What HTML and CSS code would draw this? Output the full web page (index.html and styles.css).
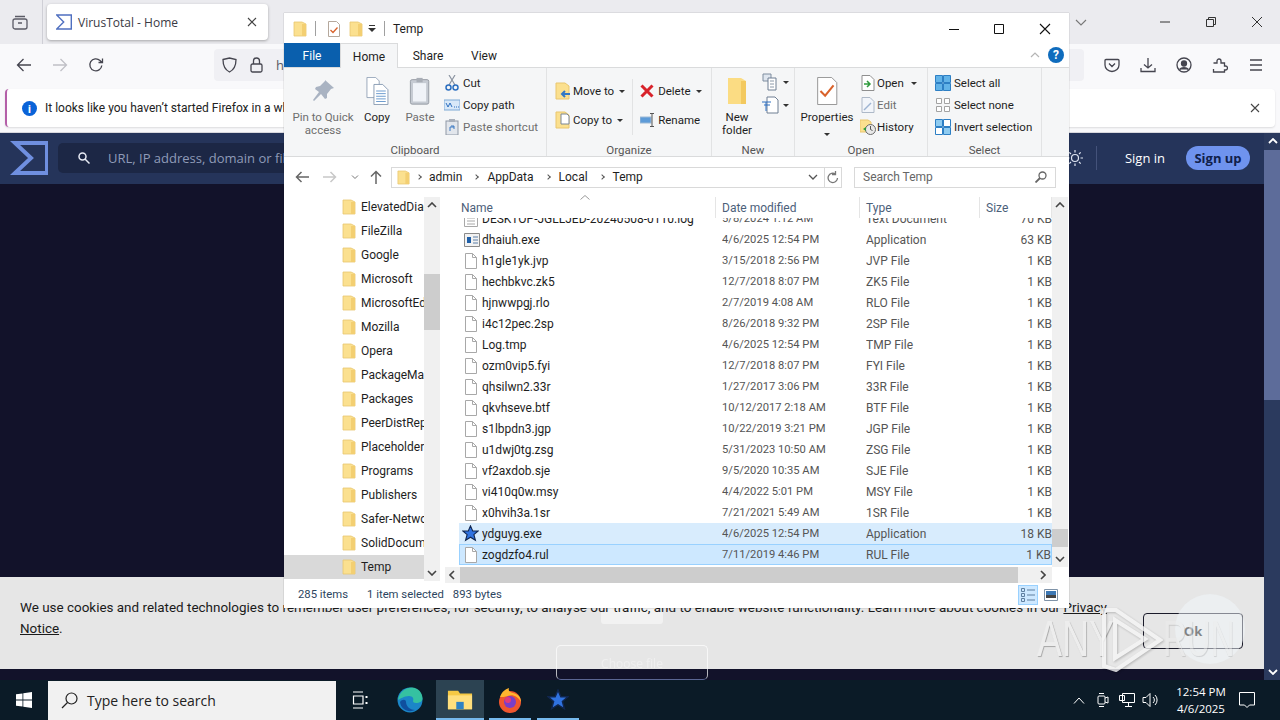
FILE: index.html
```html
<!DOCTYPE html>
<html lang="en">
<head>
    <meta charset="UTF-8">
    <title>VirusTotal - Home</title>
    <link rel="stylesheet" href="styles.css">
</head>
<body>
    <svg class="defs" width="0" height="0">
        <symbol id="folder" viewBox="0 0 14 16"><path d="M1 1h8l4 2v12H1z" fill="#fbe08f" stroke="#e9c66e" stroke-width=".8"/><path d="M9 3h4v12H9z" fill="#f3cf72"/></symbol>
        <symbol id="file" viewBox="0 0 14 16"><path d="M1.500.5h7l4 4v11h-11z" fill="#fff" stroke="#a8a8a8"/><path d="M8.500.5v4h4" fill="none" stroke="#a8a8a8"/></symbol>
        <symbol id="star" viewBox="0 0 20 20"><path d="M10 1l2.600 6h6.400l-5 4.300 1.800 6.700L10 14.400 4.200 18l1.800-6.700-5-4.300h6.400z" fill="#2f72e0" stroke="#10264f" stroke-width="1.300"/></symbol>
    </svg>

    <div class="browser">
        <div class="tabbar">
            <div class="tabbar-left">
                <svg width="18" height="18" viewBox="0 0 18 18" fill="none" stroke="#5b5b66" stroke-width="1.300"><rect x="2" y="6" width="14" height="10" rx="2"/><path d="M4 3.500h10M7 10h4"/></svg>
            </div>
            <div class="tab">
                <svg width="16" height="16" viewBox="0 0 16 16" fill="none" stroke="#4f6fc0" stroke-width="1.400"><path d="M.7 1h14.600v14H.7l7-7z"/></svg>
                <span class="tab-title">VirusTotal - Home</span>
                <svg width="10" height="10" viewBox="0 0 10 10" stroke="#444" stroke-width="1.100"><path d="M1 1l8 8M9 1l-8 8"/></svg>
            </div>
            <div class="tabbar-right">
                <svg class="tab-list" width="12" height="7" viewBox="0 0 12 7" fill="none" stroke="#777" stroke-width="1.100"><path d="M1 1l5 5 5-5"/></svg>
                <span class="winbtn"><svg width="10" height="10" viewBox="0 0 10 10" stroke="#333"><path d="M0 5h10"/></svg></span>
                <span class="winbtn"><svg width="10" height="10" viewBox="0 0 10 10" fill="none" stroke="#333"><path d="M.5 2.500h7v7h-7zM2.500 2.500v-2h7v7h-2"/></svg></span>
                <span class="winbtn"><svg width="10" height="10" viewBox="0 0 10 10" stroke="#333"><path d="M0 0l10 10M10 0L0 10"/></svg></span>
            </div>
        </div>

        <div class="toolbar">
            <div class="nav-btns">
                <svg width="16" height="16" viewBox="0 0 16 16" fill="none" stroke="#45454f" stroke-width="1.300"><path d="M15 8H1.500M7.500 2l-6 6 6 6"/></svg>
                <svg width="16" height="16" viewBox="0 0 16 16" fill="none" stroke="#c0c0c6" stroke-width="1.300"><path d="M1 8h13.500M8.500 2l6 6-6 6"/></svg>
                <svg width="16" height="16" viewBox="0 0 16 16" fill="none" stroke="#45454f" stroke-width="1.300"><path d="M13.800 8.500A6 6 0 1 1 12 3.500L14 5.500M14.500 1.500v4h-4"/></svg>
            </div>
            <div class="urlbar">
                <svg width="15" height="16" viewBox="0 0 15 16" fill="none" stroke="#45454f" stroke-width="1.300"><path d="M1 2.500l6.500-1.500 6.500 1.500c0 6-1.500 10-6.500 12.500C2.500 12.500 1 8.500 1 2.500z"/></svg>
                <svg width="13" height="16" viewBox="0 0 13 16" fill="none" stroke="#45454f" stroke-width="1.300"><rect x="1" y="7" width="11" height="8" rx="1.500"/><path d="M3.500 7V4a3 3 0 0 1 6 0v3"/></svg>
                <span class="url-text">https://www.virustotal.com</span>
            </div>
            <div class="tool-icons">
                <svg width="16" height="16" viewBox="0 0 16 16" fill="none" stroke="#45454f" stroke-width="1.300"><path d="M2 2.500h12a1 1 0 0 1 1 1V8a7 6.500 0 0 1-14 0V3.500a1 1 0 0 1 1-1zM5 6.500l3 3 3-3"/></svg>
                <svg width="16" height="16" viewBox="0 0 16 16" fill="none" stroke="#45454f" stroke-width="1.300"><path d="M8 1v10M4 7.500L8 11l4-3.500M1 11v3.500h14V11"/></svg>
                <svg width="16" height="16" viewBox="0 0 16 16" fill="none" stroke="#45454f" stroke-width="1.300"><circle cx="8" cy="8" r="7"/><circle cx="8" cy="6.500" r="2.500" fill="#45454f"/><path d="M3.500 12.500c2-2.500 7-2.500 9 0" fill="#45454f"/></svg>
                <svg width="16" height="16" viewBox="0 0 16 16" fill="none" stroke="#45454f" stroke-width="1.300"><path d="M1.500 6h3.500V4a2 2 0 0 1 4 0v2h3.500v3h1a2 2 0 0 1 0 4h-1v2H1.500v-3"/></svg>
                <svg width="16" height="16" viewBox="0 0 16 16" stroke="#45454f" stroke-width="1.300"><path d="M2 3h12M2 8h12M2 13h12"/></svg>
            </div>
        </div>

        <div class="infobar-wrap">
            <div class="infobar">
                <span class="info-icon">i</span>
                <span class="info-text">It looks like you haven&rsquo;t started Firefox in a while. Do you want to clean it up?</span>
                <svg width="10" height="10" viewBox="0 0 10 10" stroke="#444" stroke-width="1.100"><path d="M1 1l8 8M9 1l-8 8"/></svg>
            </div>
        </div>

        <div class="site">
            <div class="site-main">
                <header class="site-header">
                    <svg class="vt-logo" width="38" height="34" viewBox="0 0 38 34" fill="none" stroke="#6f8fe0" stroke-width="4"><path d="M37 2H5l16 15L5 32h32z"/></svg>
                    <div class="site-search">
                        <svg width="12" height="12" viewBox="0 0 12 12" fill="none" stroke="#e8ecf5" stroke-width="1.500"><circle cx="4.500" cy="4.500" r="3.500"/><path d="M7 7l4.500 4.500"/></svg>
                        <span>URL, IP address, domain or file hash</span>
                    </div>
                    <div class="site-actions">
                        <svg width="18" height="18" viewBox="0 0 18 18" fill="none" stroke="#dfe5f2" stroke-width="1.200"><circle cx="9" cy="9" r="3.500"/><path d="M9 1v2.500M9 14.500V17M1 9h2.500M14.500 9H17M3.300 3.300L5 5M13 13l1.700 1.700M3.300 14.700L5 13M13 5l1.700-1.700"/></svg>
                        <span class="action-sep"></span>
                        <a class="sign-in">Sign in</a>
                        <a class="sign-up">Sign up</a>
                    </div>
                </header>
                <div class="site-body"></div>
                <div class="cookie">
                    <span class="ghost-box"></span>
                    <p class="cookie-text">We use cookies and related technologies to remember user preferences, for security, to analyse our traffic, and to enable website functionality. Learn more about cookies in our <u>Privacy</u><br><u>Notice</u>.</p>
                    <button class="cookie-ok">Ok</button>
                </div>
                <div class="site-tail"></div>
            </div>
            <div class="page-scroll">
                <svg width="10" height="6" viewBox="0 0 10 6" fill="none" stroke="#fff" stroke-width="1.800"><path d="M1 5l4-4 4 4"/></svg>
                <div class="page-thumb"></div>
                <div class="page-track"></div>
                <svg width="10" height="6" viewBox="0 0 10 6" fill="none" stroke="#fff" stroke-width="1.800"><path d="M1 1l4 4 4-4"/></svg>
            </div>
        </div>
    </div>

    <div class="taskbar">
        <span class="start">
            <svg width="16" height="16" viewBox="0 0 16 16" fill="#fff"><path d="M0 2.300l6.500-.9v6.200H0zM7.300 1.300L16 0v7.600H7.300zM0 8.400h6.500v6.200L0 13.700zM7.300 8.400H16V16l-8.700-1.300z"/></svg>
        </span>
        <div class="task-search">
            <svg width="17" height="17" viewBox="0 0 17 17" fill="none" stroke="#222" stroke-width="1.200"><circle cx="10.500" cy="6.500" r="5.500"/><path d="M6.500 10.500L1 16"/></svg>
            <span>Type here to search</span>
        </div>
        <span class="task-item">
            <svg width="16" height="18" viewBox="0 0 16 18" fill="none" stroke="#fff" stroke-width="1.200"><path d="M1 1h10M1 17h10M1.500 5h9.500v8H1.500z"/><path d="M14.500 5v2M14.500 11v2" stroke-width="2"/></svg>
        </span>
        <span class="task-item is-edge">
            <svg width="26" height="26" viewBox="0 0 26 26"><circle cx="13" cy="13" r="12.500" fill="#1b86c8"/><path d="M1 13C2 5 9 .5 15 .5c6 0 10.500 5 10.500 11 0 3-3 4.500-6.500 4.500-2 0-3-1-3-2 1-2 0-5-4-5-5 0-9 3-11 4z" fill="#35c1a1"/><path d="M9 15c0 5 5 8 9 8-6 3-14 0-15-8 2-3 6-3 6 0z" fill="#0f4f9e"/></svg>
        </span>
        <span class="task-item is-active is-open">
            <svg width="26" height="24" viewBox="0 0 28 24"><path d="M1 2h11l2 3h13v17H1z" fill="#f6c944"/><path d="M1 7h26v15H1z" fill="#ffdf7d"/><path d="M10 14h8v8h-8z" fill="#2f82c4"/></svg>
        </span>
        <span class="task-item is-open is-firefox">
            <svg width="26" height="26" viewBox="0 0 26 26"><circle cx="13" cy="15" r="11" fill="#f0562e"/><path d="M3 10C5 4 9 2 12 1c-1 3 1 4 4 5 5 1 8 4 8 9-3-6-9-8-13-6-3 1-6 1-8 1z" fill="#ffb52e"/><circle cx="13" cy="15" r="6" fill="#7a3ec8"/><circle cx="11" cy="13" r="3" fill="#e23a7c"/></svg>
        </span>
        <span class="task-item is-open">
            <svg width="22" height="22"><use href="#star"/></svg>
        </span>
        <div class="tray">
            <span class="tray-icon"><svg width="12" height="7" viewBox="0 0 12 7" fill="none" stroke="#fff"><path d="M1 6.500l5-5.500 5 5.500"/></svg></span>
            <span class="tray-icon"><svg width="12" height="16" viewBox="0 0 12 16" fill="none" stroke="#fff"><rect x="1" y="4" width="7" height="8" rx="1"/><path d="M8 6l3-1v6l-3-1M2 1.500h5M2 14.500h5"/></svg></span>
            <span class="tray-icon"><svg width="16" height="16" viewBox="0 0 16 16" fill="none" stroke="#fff"><path d="M3.500 1.500h12v9h-12zM.5 3.500h5v5h-5zM9.500 10.500v4M6 14.500h7"/></svg></span>
            <span class="tray-icon"><svg width="18" height="16" viewBox="0 0 18 16" fill="none" stroke="#fff"><path d="M1 5.500h3l4-4v13l-4-4H1zM11 5a4 4 0 0 1 0 6M13 3a7 7 0 0 1 0 10"/></svg></span>
            <div class="clock"><span>12:54 PM</span><span>4/6/2025</span></div>
            <svg class="notify" width="16" height="16" viewBox="0 0 16 16" fill="none" stroke="#fff"><path d="M.5.500h15v12.500h-5L8 15.500 5.500 13h-5z"/></svg>
        </div>
    </div>

    <div class="ghost-file">Choose file</div>
    <div class="watermark">
        <span class="wm-circle"></span>
        <span class="wm-word">ANY</span>
        <svg class="wm-play" width="62" height="66" viewBox="0 0 62 66" fill="none" stroke="#f6f6f6" stroke-width="4"><path d="M3 4v56l12 4 44-30L15 4zM14 14v38l30-19z"/></svg>
        <span class="wm-word is-run">RUN</span>
    </div>

    <div class="explorer">
        <div class="ex-title">
            <svg width="14" height="16"><use href="#folder"/></svg>
            <span class="ex-sep"></span>
            <svg class="qa-check" width="14" height="16" viewBox="0 0 14 16"><path d="M1.500.5h8l3 3v12h-11z" fill="#fff" stroke="#b5a89c"/><path d="M3.500 9l2.500 2.500 4.500-5" fill="none" stroke="#d9622b" stroke-width="1.300"/></svg>
            <svg class="qa-folder" width="14" height="16"><use href="#folder"/></svg>
            <svg class="ex-qa-drop" width="8" height="7" viewBox="0 0 8 7"><path d="M1 0h6v1H1zM0 3h8L4 7z" fill="#333"/></svg>
            <span class="ex-sep"></span>
            <span class="ex-title-text">Temp</span>
            <div class="ex-controls">
                <svg width="10" height="10" viewBox="0 0 10 10" stroke="#111"><path d="M0 5.500h10"/></svg>
                <svg width="10" height="10" viewBox="0 0 10 10" fill="none" stroke="#111"><path d="M.5.500h9v9h-9z"/></svg>
                <svg width="12" height="12" viewBox="0 0 12 12" stroke="#111" stroke-width="1.100"><path d="M1 1l10 10M11 1L1 11"/></svg>
            </div>
        </div>

        <div class="ex-tabs">
            <span class="ex-tab is-file">File</span>
            <span class="ex-tab is-home">Home</span>
            <span class="ex-tab">Share</span>
            <span class="ex-tab">View</span>
            <svg class="ex-collapse" width="10" height="6" viewBox="0 0 10 6" fill="none" stroke="#b5b5b5" stroke-width="1.200"><path d="M1 5l4-4 4 4"/></svg>
            <span class="ex-help">?</span>
        </div>

        <div class="ribbon">
            <div class="rb-group is-clipboard">
                <div class="rb-items">
                    <div class="rb-large is-pin is-muted">
                        <svg width="24" height="24" viewBox="0 0 24 24" fill="#a9b3c2"><path d="M14 1l9 8-3 1-4 5 0 4-2 1-4-5-7 7-1-1 6-8-4-3 1-2 4-1 5-5z"/></svg>
                        <span>Pin to Quick<br>access</span>
                    </div>
                    <div class="rb-large is-copy">
                        <svg width="26" height="32" viewBox="0 0 26 32"><path d="M1.500.5h10l4 4v19h-14z" fill="#fff" stroke="#8f9fb5"/><path d="M9.500 8.500h10l6 6v17h-16z" fill="#fff" stroke="#7f93ad"/><path d="M12 16h11M12 19h11M12 22h11M12 25h11M12 28h11" stroke="#5a8fc8"/></svg>
                        <span>Copy</span>
                    </div>
                    <div class="rb-large is-paste is-muted">
                        <svg width="24" height="32" viewBox="0 0 24 32"><rect x="1" y="3" width="21" height="28" rx="2" fill="#c6cbd3" stroke="#8f959e"/><rect x="4" y="7" width="15" height="21" fill="#f0f3f8"/><path d="M8 1h7v5H8z" fill="#a9aeb6"/></svg>
                        <span>Paste</span>
                    </div>
                    <div class="rb-small-list">
                        <div class="rb-small">
                            <svg width="16" height="16" viewBox="0 0 16 16" fill="none"><path d="M5 10L11 0M11 10L5 0" stroke="#8a93a0" stroke-width="1.200"/><circle cx="4.500" cy="12.500" r="2.500" stroke="#2c6fc0" stroke-width="1.500"/><circle cx="11.500" cy="12.500" r="2.500" stroke="#2c6fc0" stroke-width="1.500"/></svg>
                            <span>Cut</span>
                        </div>
                        <div class="rb-small">
                            <svg width="16" height="16" viewBox="0 0 16 16"><rect x="0" y="3" width="16" height="10" fill="#d8e8f8" stroke="#7fa9d6"/><path d="M2 6l2 4 2-4 2 4M10 10h1M12 10h1M14 10h1" fill="none" stroke="#2c6fc0"/></svg>
                            <span>Copy path</span>
                        </div>
                        <div class="rb-small is-muted">
                            <svg width="16" height="16" viewBox="0 0 16 16"><rect x="2" y="2" width="12" height="14" fill="#e2e6ec" stroke="#8f98a6"/><path d="M5 0h6v3H5z" fill="#a9b0bb"/><path d="M6 12V8h4M7 7l3 0v3" fill="none" stroke="#3b78c2"/></svg>
                            <span>Paste shortcut</span>
                        </div>
                    </div>
                </div>
                <div class="rb-label">Clipboard</div>
            </div>

            <div class="rb-group is-organize">
                <div class="rb-items">
                    <div class="rb-split">
                        <div class="rb-wide">
                            <svg width="16" height="18" viewBox="0 0 16 18"><path d="M1 1h9l4 3v13H1z" fill="#fbe08f" stroke="#e9c66e"/><path d="M15 12H7M10 9l-3 3 3 3" fill="none" stroke="#3178c6" stroke-width="2"/></svg>
                            <span>Move to</span><i class="caret"></i>
                        </div>
                        <div class="rb-wide">
                            <svg width="16" height="18" viewBox="0 0 16 18"><path d="M1 1h9l4 3v13H1z" fill="#fbe08f" stroke="#e9c66e"/><path d="M6 3h6l2 2v8H6z" fill="#fff" stroke="#7a8694"/></svg>
                            <span>Copy to</span><i class="caret"></i>
                        </div>
                    </div>
                    <span class="rb-vline"></span>
                    <div class="rb-split">
                        <div class="rb-wide">
                            <svg class="del-icon" width="14" height="14" viewBox="0 0 14 14" stroke="#d8222a" stroke-width="3"><path d="M1.500 1.500l11 11M12.500 1.500l-11 11"/></svg>
                            <span>Delete</span><i class="caret"></i>
                        </div>
                        <div class="rb-wide">
                            <svg width="16" height="14" viewBox="0 0 16 14"><rect x="0" y="4" width="11" height="6" fill="#5d9bd8" stroke="#9db9d6"/><path d="M12 0v14M10 .5h4M10 13.500h4" stroke="#555" fill="none"/></svg>
                            <span>Rename</span>
                        </div>
                    </div>
                </div>
                <div class="rb-label">Organize</div>
            </div>

            <div class="rb-group is-new">
                <div class="rb-items">
                    <div class="rb-large is-newfolder">
                        <svg width="20" height="28" viewBox="0 0 20 28"><path d="M1 1h13l5 3v23H1z" fill="#fbdc83"/><path d="M14 4h5v23h-5z" fill="#f3c95f"/></svg>
                        <span>New<br>folder</span>
                    </div>
                    <div class="rb-newitems">
                        <div class="rb-newitem">
                            <svg width="18" height="18" viewBox="0 0 18 18"><path d="M1 1h8v7H1z" fill="#dfe6ef" stroke="#7f8d9f"/><path d="M6 5h8v12H6z" fill="#fff" stroke="#6f7f93"/><path d="M8 8h4M8 11h4M8 14h4" stroke="#8a98a8"/></svg>
                            <i class="caret"></i>
                        </div>
                        <div class="rb-newitem">
                            <svg width="18" height="18" viewBox="0 0 18 18"><path d="M5 1h8l3 3v13H5z" fill="#fff" stroke="#6f7f93"/><path d="M0 6h9M2 9h6M4 6v9" stroke="#2c6fc0" fill="none"/></svg>
                            <i class="caret"></i>
                        </div>
                    </div>
                </div>
                <div class="rb-label">New</div>
            </div>

            <div class="rb-group is-open">
                <div class="rb-items">
                    <div class="rb-large is-props">
                        <svg width="22" height="30" viewBox="0 0 22 30"><path d="M1 .5h15l5.500 5.500v23.500H1z" fill="#fff" stroke="#8f8f8f"/><path d="M4 15l5 5 9-11" fill="none" stroke="#d9622b" stroke-width="2.200"/></svg>
                        <span>Properties</span>
                        <i class="caret"></i>
                    </div>
                    <div class="rb-small-list">
                        <div class="rb-small">
                            <svg width="14" height="16" viewBox="0 0 14 16"><path d="M1 .5h8l4 4v11H1z" fill="#fff" stroke="#8f8f8f"/><path d="M3 9h5M6 6l3 3-3 3" fill="none" stroke="#2f9a3c" stroke-width="1.500"/></svg>
                            <span>Open</span><i class="caret"></i>
                        </div>
                        <div class="rb-small is-muted">
                            <svg width="14" height="16" viewBox="0 0 14 16"><path d="M1 .5h8l4 4v11H1z" fill="#f2f5fa" stroke="#aeb9c8"/><path d="M3 13l7-7" stroke="#9db4d2" stroke-width="1.500"/></svg>
                            <span>Edit</span>
                        </div>
                        <div class="rb-small">
                            <svg width="16" height="16" viewBox="0 0 16 16"><path d="M0 1h8l3 2v10H0z" fill="#fbe08f" stroke="#e9c66e"/><circle cx="10.500" cy="10.500" r="5" fill="#e8e8e8" stroke="#6b6b6b"/><path d="M10.500 7v3.500l2 1" fill="none" stroke="#555"/><path d="M3 10l3-2v4z" fill="#2f9a3c"/></svg>
                            <span>History</span>
                        </div>
                    </div>
                </div>
                <div class="rb-label">Open</div>
            </div>

            <div class="rb-group is-select">
                <div class="rb-items">
                    <div class="rb-small-list">
                        <div class="rb-small">
                            <svg width="16" height="16" viewBox="0 0 16 16" fill="#62b3e8" stroke="#2d7fc4"><path d="M.5.500h7v7h-7zM8.500.500h7v7h-7zM.5 8.500h7v7h-7zM8.500 8.500h7v7h-7z"/></svg>
                            <span>Select all</span>
                        </div>
                        <div class="rb-small">
                            <svg width="16" height="16" viewBox="0 0 16 16" fill="#fff" stroke="#a3a3a3"><path d="M1.500 1.500h5v5h-5zM9.500 1.500h5v5h-5zM1.500 9.500h5v5h-5zM9.500 9.500h5v5h-5z"/></svg>
                            <span>Select none</span>
                        </div>
                        <div class="rb-small">
                            <svg width="16" height="16" viewBox="0 0 16 16" stroke="#2d7fc4"><path d="M.5 8.500h7v7h-7zM8.500.500h7v7h-7z" fill="#fff"/><path d="M.5.500h7v7h-7zM8.500 8.500h7v7h-7z" fill="#8ecbf0"/></svg>
                            <span>Invert selection</span>
                        </div>
                    </div>
                </div>
                <div class="rb-label">Select</div>
            </div>
        </div>

        <div class="ex-address">
            <div class="ex-nav">
                <svg width="14" height="12" viewBox="0 0 14 12" fill="none" stroke="#666" stroke-width="1.500"><path d="M14 6H1.500M6.500 1l-5 5 5 5"/></svg>
                <svg width="14" height="12" viewBox="0 0 14 12" fill="none" stroke="#c8c8c8" stroke-width="1.500"><path d="M0 6h12.500M7.500 1l5 5-5 5"/></svg>
                <svg width="8" height="5" viewBox="0 0 8 5" fill="none" stroke="#777"><path d="M1 .5l3 3 3-3"/></svg>
                <svg class="nav-up" width="12" height="14" viewBox="0 0 12 14" fill="none" stroke="#666" stroke-width="1.500"><path d="M6 14V1.500M1 6.500l5-5 5 5"/></svg>
            </div>
            <div class="ex-path">
                <svg width="13" height="15"><use href="#folder"/></svg>
                <i class="crumb-sep"></i><span>admin</span>
                <i class="crumb-sep"></i><span>AppData</span>
                <i class="crumb-sep"></i><span>Local</span>
                <i class="crumb-sep"></i><span>Temp</span>
                <svg class="path-drop" width="10" height="6" viewBox="0 0 10 6" fill="none" stroke="#555" stroke-width="1.300"><path d="M1 1l4 4 4-4"/></svg>
                <span class="path-refresh">
                    <svg width="12" height="13" viewBox="0 0 12 13" fill="none" stroke="#777" stroke-width="1.300"><path d="M10.500 7a4.700 4.700 0 1 1-2-4M8.500 0v3.500H5"/></svg>
                </span>
            </div>
            <div class="ex-search">
                <span>Search Temp</span>
                <svg width="12" height="12" viewBox="0 0 12 12" fill="none" stroke="#666" stroke-width="1.300"><circle cx="7.500" cy="4.500" r="3.500"/><path d="M5 7l-4.500 4.500" stroke-width="1.800"/></svg>
            </div>
        </div>

        <div class="ex-body">
            <div class="tree">
                <div class="tree-list">
                    <div class="tree-row"><svg width="14" height="16"><use href="#folder"/></svg><span>ElevatedDiagnostics</span></div>
                    <div class="tree-row"><svg width="14" height="16"><use href="#folder"/></svg><span>FileZilla</span></div>
                    <div class="tree-row"><svg width="14" height="16"><use href="#folder"/></svg><span>Google</span></div>
                    <div class="tree-row"><svg width="14" height="16"><use href="#folder"/></svg><span>Microsoft</span></div>
                    <div class="tree-row"><svg width="14" height="16"><use href="#folder"/></svg><span>MicrosoftEdge</span></div>
                    <div class="tree-row"><svg width="14" height="16"><use href="#folder"/></svg><span>Mozilla</span></div>
                    <div class="tree-row"><svg width="14" height="16"><use href="#folder"/></svg><span>Opera</span></div>
                    <div class="tree-row"><svg width="14" height="16"><use href="#folder"/></svg><span>PackageManager</span></div>
                    <div class="tree-row"><svg width="14" height="16"><use href="#folder"/></svg><span>Packages</span></div>
                    <div class="tree-row"><svg width="14" height="16"><use href="#folder"/></svg><span>PeerDistRepub</span></div>
                    <div class="tree-row"><svg width="14" height="16"><use href="#folder"/></svg><span>Placeholder</span></div>
                    <div class="tree-row"><svg width="14" height="16"><use href="#folder"/></svg><span>Programs</span></div>
                    <div class="tree-row"><svg width="14" height="16"><use href="#folder"/></svg><span>Publishers</span></div>
                    <div class="tree-row"><svg width="14" height="16"><use href="#folder"/></svg><span>Safer-Networking</span></div>
                    <div class="tree-row"><svg width="14" height="16"><use href="#folder"/></svg><span>SolidDocuments</span></div>
                    <div class="tree-row is-current"><svg width="14" height="16"><use href="#folder"/></svg><span>Temp</span></div>
                </div>
                <div class="vscroll is-tree">
                    <svg width="10" height="6" viewBox="0 0 10 6" fill="none" stroke="#444" stroke-width="1.600"><path d="M1 5l4-4 4 4"/></svg>
                    <div class="vtrack"><div class="vthumb"></div></div>
                    <svg width="10" height="6" viewBox="0 0 10 6" fill="none" stroke="#444" stroke-width="1.600"><path d="M1 1l4 4 4-4"/></svg>
                </div>
            </div>

            <div class="files">
                <svg class="sort-mark" width="10" height="5" viewBox="0 0 10 5" fill="none" stroke="#9a9a9a"><path d="M.5 4.500l4.500-4 4.500 4"/></svg>
                <div class="files-main">
                    <div class="file-head">
                        <span class="col-name">Name</span>
                        <span class="col-date">Date modified</span>
                        <span class="col-type">Type</span>
                        <span class="col-size">Size</span>
                    </div>
                    <div class="file-list">
                        <div class="file-row is-clipped"><svg width="14" height="16" viewBox="0 0 14 16"><path d="M.5.500h13v15H.5z" fill="#fff" stroke="#a8a8a8"/><path d="M3 4h8M3 7h8M3 10h8M3 13h8" stroke="#a8a8a8"/></svg><span>DESKTOP-JGLLJED-20240508-0110.log</span><span>5/8/2024 1:12 AM</span><span>Text Document</span><span>70 KB</span></div>
                        <div class="file-row"><svg width="16" height="14" viewBox="0 0 16 14"><path d="M.5.500h15v13H.5z" fill="#f2f2f2" stroke="#8a8a8a"/><path d="M3 4h4v6H3z" fill="#1f5fa8"/><path d="M9 4h5M9 7h5M9 10h5" stroke="#5a7ea8"/></svg><span>dhaiuh.exe</span><span>4/6/2025 12:54 PM</span><span>Application</span><span>63 KB</span></div>
                        <div class="file-row"><svg width="14" height="16"><use href="#file"/></svg><span>h1gle1yk.jvp</span><span>3/15/2018 2:56 PM</span><span>JVP File</span><span>1 KB</span></div>
                        <div class="file-row"><svg width="14" height="16"><use href="#file"/></svg><span>hechbkvc.zk5</span><span>12/7/2018 8:07 PM</span><span>ZK5 File</span><span>1 KB</span></div>
                        <div class="file-row"><svg width="14" height="16"><use href="#file"/></svg><span>hjnwwpgj.rlo</span><span>2/7/2019 4:08 AM</span><span>RLO File</span><span>1 KB</span></div>
                        <div class="file-row"><svg width="14" height="16"><use href="#file"/></svg><span>i4c12pec.2sp</span><span>8/26/2018 9:32 PM</span><span>2SP File</span><span>1 KB</span></div>
                        <div class="file-row"><svg width="14" height="16"><use href="#file"/></svg><span>Log.tmp</span><span>4/6/2025 12:54 PM</span><span>TMP File</span><span>1 KB</span></div>
                        <div class="file-row"><svg width="14" height="16"><use href="#file"/></svg><span>ozm0vip5.fyi</span><span>12/7/2018 8:07 PM</span><span>FYI File</span><span>1 KB</span></div>
                        <div class="file-row"><svg width="14" height="16"><use href="#file"/></svg><span>qhsilwn2.33r</span><span>1/27/2017 3:06 PM</span><span>33R File</span><span>1 KB</span></div>
                        <div class="file-row"><svg width="14" height="16"><use href="#file"/></svg><span>qkvhseve.btf</span><span>10/12/2017 2:18 AM</span><span>BTF File</span><span>1 KB</span></div>
                        <div class="file-row"><svg width="14" height="16"><use href="#file"/></svg><span>s1lbpdn3.jgp</span><span>10/22/2019 3:21 PM</span><span>JGP File</span><span>1 KB</span></div>
                        <div class="file-row"><svg width="14" height="16"><use href="#file"/></svg><span>u1dwj0tg.zsg</span><span>5/31/2023 10:50 AM</span><span>ZSG File</span><span>1 KB</span></div>
                        <div class="file-row"><svg width="14" height="16"><use href="#file"/></svg><span>vf2axdob.sje</span><span>9/5/2020 10:35 AM</span><span>SJE File</span><span>1 KB</span></div>
                        <div class="file-row"><svg width="14" height="16"><use href="#file"/></svg><span>vi410q0w.msy</span><span>4/4/2022 5:01 PM</span><span>MSY File</span><span>1 KB</span></div>
                        <div class="file-row"><svg width="14" height="16"><use href="#file"/></svg><span>x0hvih3a.1sr</span><span>7/21/2021 5:49 AM</span><span>1SR File</span><span>1 KB</span></div>
                        <div class="file-row is-selected"><svg class="row-star" width="17" height="17"><use href="#star"/></svg><span>ydguyg.exe</span><span>4/6/2025 12:54 PM</span><span>Application</span><span>18 KB</span></div>
                        <div class="file-row is-selected is-focus"><svg width="14" height="16"><use href="#file"/></svg><span>zogdzfo4.rul</span><span>7/11/2019 4:46 PM</span><span>RUL File</span><span>1 KB</span></div>
                    </div>
                </div>
                <div class="vscroll is-files">
                    <svg width="10" height="6" viewBox="0 0 10 6" fill="none" stroke="#444" stroke-width="1.600"><path d="M1 5l4-4 4 4"/></svg>
                    <div class="vtrack"><div class="vthumb"></div></div>
                    <svg width="10" height="6" viewBox="0 0 10 6" fill="none" stroke="#444" stroke-width="1.600"><path d="M1 1l4 4 4-4"/></svg>
                </div>
                <div class="hscroll">
                    <svg width="6" height="10" viewBox="0 0 6 10" fill="none" stroke="#444" stroke-width="1.600"><path d="M5 1L1 5l4 4"/></svg>
                    <div class="hthumb"></div>
                    <svg width="6" height="10" viewBox="0 0 6 10" fill="none" stroke="#444" stroke-width="1.600"><path d="M1 1l4 4-4 4"/></svg>
                </div>
            </div>
        </div>

        <div class="ex-status">
            <span class="st-count">285 items</span>
            <span class="st-sel">1 item selected</span>
            <span class="st-bytes">893 bytes</span>
            <div class="st-views">
                <span class="view-btn is-on"><svg width="14" height="14" viewBox="0 0 14 14" fill="none" stroke="#5f7f9f"><path d="M.5.500h3v3h-3zM.5 5.500h3v3h-3zM.5 10.500h3v3h-3zM6 2h8M6 7h8M6 12h8"/></svg></span>
                <span class="view-btn"><svg width="14" height="12" viewBox="0 0 14 12"><path d="M.5.500h13v11H.5z" fill="#fff" stroke="#7f93a8"/><path d="M2 2h10v4H2z" fill="#3c78b4"/><path d="M2 6h10v3H2z" fill="#444"/></svg></span>
            </div>
        </div>
    </div>
</body>
</html>
```

FILE: styles.css
```css
* {
    box-sizing: border-box;
}
html, body {
    margin: 0;
    padding: 0;
}
body {
    width: 1280px;
    height: 720px;
    position: relative;
    overflow: hidden;
    background-color: #12122a;
    font-family: "Open Sans", "Noto Sans", sans-serif;
    font-size: 12px;
    color: #1a1a1a;
}
svg {
    display: block;
    flex: none;
}
.defs {
    position: absolute;
}

/* browser */
.browser {
    height: 680px;
    display: flex;
    flex-direction: column;
}
.tabbar {
    height: 44px;
    background-color: #ebebef;
    display: flex;
    align-items: center;
}
.tabbar-left {
    width: 43px;
    height: 44px;
    padding-left: 11px;
    display: flex;
    align-items: center;
    border-right: 1px solid #cfcfd6;
}
.tab {
    width: 221px;
    height: 36px;
    margin-left: 4px;
    padding: 0 11px 0 9px;
    background-color: #fff;
    border-radius: 4px;
    box-shadow: 0 1px 3px rgba(0, 0, 0, .3);
    display: flex;
    align-items: center;
    font-size: 12px;
    color: #3a3a44;
}
.tab-title {
    flex: 1;
    margin-left: 6px;
}
.tabbar-right {
    flex: 1;
    display: flex;
    align-items: center;
    justify-content: flex-end;
}
.tab-list {
    margin-right: 55px;
}
.winbtn {
    width: 46px;
    display: flex;
    justify-content: center;
}
.toolbar {
    height: 44px;
    padding-bottom: 2px;
    background-color: #f9f9fb;
    display: flex;
    align-items: center;
}
.nav-btns {
    width: 214px;
    padding-left: 16px;
    display: flex;
    gap: 20px;
}
.urlbar {
    width: 870px;
    height: 32px;
    padding-left: 8px;
    background-color: #f0f0f4;
    border-radius: 4px;
    display: flex;
    align-items: center;
    gap: 13px;
    color: #5b5b66;
    font-size: 13px;
}
.tool-icons {
    margin-left: 20px;
    display: flex;
    gap: 20px;
}
.infobar-wrap {
    height: 45px;
    padding: 1px 5px 5px;
    background-color: #f9f9fb;
    border-bottom: 1px solid #d8d8de;
}
.infobar {
    height: 38px;
    padding: 0 15px 0 15px;
    background-color: #fff;
    border-left: 2px solid #b45fa8;
    border-radius: 4px;
    box-shadow: 0 1px 2px rgba(0, 0, 0, .12);
    display: flex;
    align-items: center;
}
.info-icon {
    width: 15px;
    height: 15px;
    background-color: #0a63d8;
    border-radius: 50%;
    color: #fff;
    font-size: 11px;
    font-weight: 700;
    line-height: 15px;
    text-align: center;
}
.info-text {
    flex: 1;
    margin-left: 8px;
    font-family: "Roboto", sans-serif;
    font-size: 12px;
    color: #222;
}

/* site behind the window */
.site {
    flex: 1;
    display: flex;
    min-height: 0;
}
.site-main {
    flex: 1;
    display: flex;
    flex-direction: column;
}
.site-header {
    height: 51px;
    padding-left: 10px;
    padding-bottom: 1px;
    background-color: #25345a;
    display: flex;
    align-items: center;
}
.vt-logo {
    margin-right: 10px;
}
.site-search {
    width: 260px;
    height: 30px;
    padding-left: 20px;
    background-color: #1c2745;
    border-radius: 5px;
    display: flex;
    align-items: center;
    gap: 18px;
    color: #8f9bb8;
    font-size: 13px;
    white-space: nowrap;
}
.site-actions {
    margin-left: auto;
    padding-right: 14px;
    display: flex;
    align-items: center;
}
.action-sep {
    width: 1px;
    height: 24px;
    margin: 0 28px 0 12px;
    background-color: #44527a;
}
.sign-in {
    color: #fff;
    font-size: 13px;
}
.sign-up {
    width: 64px;
    height: 24px;
    margin-left: 21px;
    background-color: #6f93ee;
    border-radius: 12px;
    color: #10204a;
    font-size: 13px;
    font-weight: 700;
    line-height: 24px;
    text-align: center;
}
.site-body {
    flex: 1;
    background-color: #12122a;
}
.cookie {
    height: 92px;
    padding: 20px 21px 0 20px;
    background-color: #e6e6e6;
    display: flex;
    position: relative;
    color: #1b1b1b;
    font-family: "Roboto", sans-serif;
    font-size: 13.440px;
}
.ghost-box {
    position: absolute;
    left: 601px;
    top: 31px;
    width: 62px;
    height: 16px;
    background-color: #f2f2f2;
    border-radius: 0 0 3px 3px;
}
.cookie-text {
    width: 1090px;
    margin: 0;
    line-height: 21px;
    white-space: nowrap;
    position: relative;
}
.cookie-ok {
    width: 100px;
    height: 36px;
    margin: 16px 0 0 33px;
    background: none;
    border: 1.500px solid #1b1b2a;
    border-radius: 4px;
    font-family: "Open Sans", sans-serif;
    font-size: 13px;
    font-weight: 700;
    color: #111;
}
.site-tail {
    height: 11px;
    background-color: #12122a;
}
.page-scroll {
    width: 17px;
    padding: 5px 0;
    background-color: #2b3a5e;
    display: flex;
    flex-direction: column;
    align-items: center;
}
.page-thumb {
    width: 17px;
    height: 250px;
    margin-top: 6px;
    background-color: #5d6c9a;
}
.page-track {
    flex: 1;
}

/* overlays on the page */
.ghost-file {
    position: absolute;
    left: 556px;
    top: 645px;
    width: 152px;
    height: 35px;
    border: 1px solid #fff;
    border-bottom-color: #7a8ac0;
    border-radius: 5px;
    opacity: .7;
    color: #f4f4f4;
    font-size: 12px;
    line-height: 35px;
    text-align: center;
}
.watermark {
    position: absolute;
    left: 1037px;
    top: 606px;
    width: 196px;
    height: 66px;
    display: flex;
    align-items: center;
    pointer-events: none;
}
.wm-circle {
    position: absolute;
    left: 138px;
    top: -12px;
    width: 70px;
    height: 70px;
    background-color: #f2f7fb;
    border-radius: 50%;
    opacity: .5;
}
.wm-word {
    position: relative;
    width: 64px;
    color: #ededed;
    font-family: "Liberation Sans", sans-serif;
    font-size: 50px;
    line-height: 50px;
    transform: scaleX(.75);
    transform-origin: left center;
    text-shadow: 1px 1px 1px rgba(0, 0, 0, .28);
}
.wm-word.is-run {
    transform: scaleX(.66);
    opacity: .45;
}
.wm-play {
    position: relative;
    opacity: .8;
    filter: drop-shadow(1px 1px 1px rgba(0, 0, 0, .25));
}

/* taskbar */
.taskbar {
    height: 40px;
    background-color: #0b1b27;
    display: flex;
    align-items: stretch;
    color: #fff;
}
.start {
    width: 48px;
    display: flex;
    align-items: center;
    justify-content: center;
}
.task-search {
    width: 288px;
    margin-top: 1px;
    padding-left: 13px;
    background-color: #f1f1f1;
    display: flex;
    align-items: center;
    gap: 9px;
    color: #222;
    font-size: 14px;
}
.task-item {
    width: 48px;
    display: flex;
    align-items: center;
    justify-content: center;
    position: relative;
}
.task-item.is-edge {
    width: 52px;
}
.task-item.is-firefox {
    margin-left: 2px;
}
.task-item.is-active {
    background-color: #2c4352;
}
.task-item.is-open::after {
    content: "";
    position: absolute;
    left: 0;
    right: 0;
    bottom: 0;
    height: 2px;
    background-color: #76b9ed;
}
.task-item.is-open:not(.is-active)::after {
    left: 3px;
    right: 3px;
}
.tray {
    flex: 1;
    padding-right: 25px;
    display: flex;
    align-items: center;
    justify-content: flex-end;
}
.tray-icon {
    width: 24px;
    display: flex;
    justify-content: center;
}
.clock {
    width: 70px;
    margin-left: 3px;
    display: flex;
    flex-direction: column;
    align-items: center;
    font-size: 11.500px;
    line-height: 17px;
}
.notify {
    margin-left: 3px;
}

/* explorer window */
.explorer {
    position: absolute;
    left: 284px;
    top: 13px;
    width: 785px;
    height: 595px;
    background-color: #fff;
    display: flex;
    flex-direction: column;
    box-shadow: 0 0 1px rgba(0, 0, 0, .4);
    font-family: "Roboto", "Noto Sans", sans-serif;
    font-size: 12px;
    color: #1e1e1e;
    overflow: hidden;
}
.ex-title {
    height: 30px;
    padding: 1px 0 0 9px;
    display: flex;
    align-items: center;
}
.qa-check {
    margin-left: 11px;
}
.qa-folder {
    margin-left: 8px;
}
.ex-qa-drop {
    margin-left: 5px;
}
.ex-sep {
    width: 1px;
    height: 15px;
    margin-left: 8px;
    background-color: #a0a0a0;
}
.ex-title-text {
    margin-left: 8px;
}
.ex-controls {
    margin-left: auto;
    padding-right: 18px;
    display: flex;
    align-items: center;
    gap: 35px;
}
.ex-tabs {
    height: 25px;
    background-color: #fff;
    border-bottom: 1px solid #dadbdc;
    display: flex;
    align-items: stretch;
}
.ex-tab {
    width: 60px;
    padding-top: 2px;
    display: flex;
    align-items: center;
    justify-content: center;
}
.ex-tab.is-file {
    width: 56px;
    background-color: #0a5fad;
    color: #fff;
}
.ex-tab.is-home {
    width: 58px;
    margin-bottom: -1px;
    background-color: #f5f6f7;
    border: 1px solid #dadbdc;
    border-width: 1px 1px 0;
}
.ex-tab:nth-child(4) {
    width: 52px;
}
.ex-collapse {
    margin: 9px 0 0 auto;
}
.ex-help {
    width: 16px;
    height: 16px;
    margin: 4px 5px 0 8px;
    background-color: #0f6cbd;
    border-radius: 50%;
    color: #fff;
    font-size: 12px;
    font-weight: 700;
    line-height: 16px;
    text-align: center;
}
.ribbon {
    height: 89px;
    background-color: #f5f6f7;
    border-bottom: 1px solid #dadbdc;
    display: flex;
    font-size: 11.500px;
}
.rb-group {
    padding-top: 2px;
    border-right: 1px solid #e2e3e4;
    display: flex;
    flex-direction: column;
}
.rb-group.is-clipboard { width: 263px; }
.rb-group.is-organize { width: 165px; }
.rb-group.is-new { width: 83px; }
.rb-group.is-open { width: 133px; }
.rb-group.is-select { width: 114px; }
.rb-items {
    height: 73px;
    display: flex;
}
.rb-label {
    padding-top: 2px;
    text-align: center;
    color: #555;
    line-height: 12px;
}
.is-muted {
    color: #6e6e6e;
}
.rb-large {
    padding-top: 7px;
    display: flex;
    flex-direction: column;
    align-items: center;
    line-height: 13px;
    text-align: center;
    white-space: nowrap;
}
.rb-large svg {
    height: 28px;
    margin-bottom: 6px;
}
.rb-large.is-pin {
    width: 62px;
    margin-left: 8px;
}
.rb-large.is-copy {
    width: 40px;
    margin-left: 3px;
}
.rb-large.is-paste {
    width: 36px;
    margin-left: 5px;
}
.rb-small-list {
    padding-top: 2px;
    display: flex;
    flex-direction: column;
}
.is-clipboard .rb-small-list {
    margin-left: 6px;
}
.rb-small {
    height: 22px;
    display: flex;
    align-items: center;
    gap: 3px;
    white-space: nowrap;
}
.is-open .rb-small {
    gap: 1px;
}
.rb-small > svg {
    width: 16px;
}
.rb-small .caret {
    margin-left: 6px;
}
.caret {
    width: 0;
    height: 0;
    margin-left: 3px;
    border: 3px solid transparent;
    border-top: 3px solid #333;
    border-bottom: 0;
    flex: none;
}
.rb-split {
    padding: 12px 0 0 8px;
    display: flex;
    flex-direction: column;
    gap: 11px;
}
.rb-split + .rb-vline + .rb-split {
    padding-left: 7px;
}
.rb-wide {
    height: 18px;
    display: flex;
    align-items: center;
    gap: 2px;
    white-space: nowrap;
}
.del-icon {
    margin-right: 2px;
}
.rb-vline {
    width: 1px;
    height: 56px;
    margin: 9px 0 0 7px;
    background-color: #e2e3e4;
}
.rb-large.is-newfolder {
    width: 34px;
    margin-left: 8px;
}
.rb-newitems {
    margin-left: 8px;
    padding-top: 3px;
    display: flex;
    flex-direction: column;
    gap: 5px;
}
.rb-newitem {
    display: flex;
    align-items: center;
}
.rb-large.is-props {
    width: 54px;
    margin: 0 6px 0 5px;
}
.rb-large.is-props .caret {
    margin: 9px 0 0;
}
.is-select .rb-small-list {
    margin-left: 7px;
}
.ex-address {
    height: 40px;
    padding: 0 12px 0 11px;
    display: flex;
    align-items: center;
}
.ex-nav {
    width: 96px;
    display: flex;
    align-items: center;
    gap: 14px;
}
.nav-up {
    margin-left: -3px;
}
.ex-path {
    width: 451px;
    height: 21px;
    padding-left: 5px;
    border: 1px solid #d9d9d9;
    display: flex;
    align-items: center;
}
.crumb-sep {
    width: 4px;
    height: 4px;
    margin: 0 9px 0 7px;
    border-top: 1px solid #555;
    border-right: 1px solid #555;
    transform: rotate(45deg);
    flex: none;
}
.ex-path svg:first-child + .crumb-sep {
    margin-left: 7px;
    margin-right: 8px;
}
.ex-path span:not(.path-refresh) {
    margin-right: 5px;
}
.path-drop {
    margin-left: auto;
    margin-right: 3px;
}
.path-refresh {
    width: 17px;
    height: 19px;
    margin-left: 3px;
    border-left: 1px solid #d9d9d9;
    display: flex;
    align-items: center;
    justify-content: center;
}
.ex-search {
    width: 202px;
    height: 21px;
    margin-left: 12px;
    padding: 0 8px;
    border: 1px solid #d9d9d9;
    display: flex;
    align-items: center;
    justify-content: space-between;
    color: #666;
}
.ex-body {
    flex: 1;
    min-height: 0;
    display: flex;
}
.tree {
    width: 156px;
    display: flex;
}
.tree-list {
    width: 140px;
    margin-top: -2px;
    overflow: hidden;
}
.tree-row {
    height: 24px;
    padding-left: 58px;
    display: flex;
    align-items: center;
    gap: 5px;
    white-space: nowrap;
    overflow: hidden;
}
.tree-row.is-current {
    background-color: #d9d9d9;
}
.vscroll {
    width: 16px;
    padding: 5px 0;
    background-color: #f0f0f0;
    display: flex;
    flex-direction: column;
    align-items: center;
}
.vtrack {
    flex: 1;
    width: 100%;
}
.vthumb {
    background-color: #cdcdcd;
}
.vscroll.is-tree {
    height: 384px;
}
.vscroll.is-tree .vthumb {
    height: 56px;
    margin-top: 66px;
}
.files {
    flex: 1;
    min-width: 0;
    margin: 0 1px 0 5px;
    display: grid;
    grid-template-columns: 1fr 16px;
    grid-template-rows: 1fr 16px;
    position: relative;
}
.files-main {
    min-height: 0;
    overflow: hidden;
    display: flex;
    flex-direction: column;
}
.file-head {
    height: 21px;
    flex: none;
    display: grid;
    grid-template-columns: 271px 144px 120px 1fr;
    background-color: #fff;
    color: #4c607a;
    position: relative;
    z-index: 1;
}
.file-head span {
    padding: 4px 0 0 6px;
    border-right: 1px solid #e5e5e5;
    white-space: nowrap;
}
.file-head .col-name {
    padding-left: 16px;
}
.sort-mark {
    position: absolute;
    left: 135px;
    top: -2px;
    z-index: 2;
}
.file-list {
    margin-left: 14px;
}
.file-row {
    height: 21px;
    padding-left: 5px;
    display: grid;
    grid-template-columns: 18px 240px 144px 1fr 60px;
    align-items: center;
    white-space: nowrap;
}
.file-row span {
    overflow: hidden;
}
.file-row span:nth-child(n+3) {
    color: #555;
}
.file-row span:nth-child(3) {
    font-size: 11.200px;
}
.file-row span:last-child {
    text-align: right;
}
.file-row > svg {
    justify-self: start;
}
.file-row > svg.row-star {
    margin-left: -2px;
}
.file-row.is-selected {
    background-color: #d8ecfd;
}
.file-row.is-focus {
    background-color: #cde8ff;
    border: 1px solid #99d1ff;
    padding-left: 4px;
}
.is-clipped {
    margin-top: -10px;
}
.vscroll.is-files .vthumb {
    height: 18px;
    margin-top: 321px;
}
.hscroll {
    grid-column: 1;
    height: 16px;
    padding: 0 6px 0 4px;
    background-color: #f0f0f0;
    display: flex;
    align-items: center;
}
.hthumb {
    width: 558px;
    height: 16px;
    margin: 0 auto 0 5px;
    background-color: #cdcdcd;
}
.ex-status {
    height: 25px;
    flex: none;
    padding: 0 0 2px 14px;
    display: flex;
    align-items: center;
    color: #2c4560;
    font-size: 11.300px;
}
.st-sel {
    margin-left: 19px;
}
.st-bytes {
    margin-left: 9px;
}
.st-views {
    margin-left: auto;
    margin-right: 8px;
    display: flex;
    gap: 3px;
}
.view-btn {
    width: 20px;
    height: 20px;
    display: flex;
    align-items: center;
    justify-content: center;
}
.view-btn.is-on {
    background-color: #cde8ff;
    border: 1px solid #99d1ff;
}
```
